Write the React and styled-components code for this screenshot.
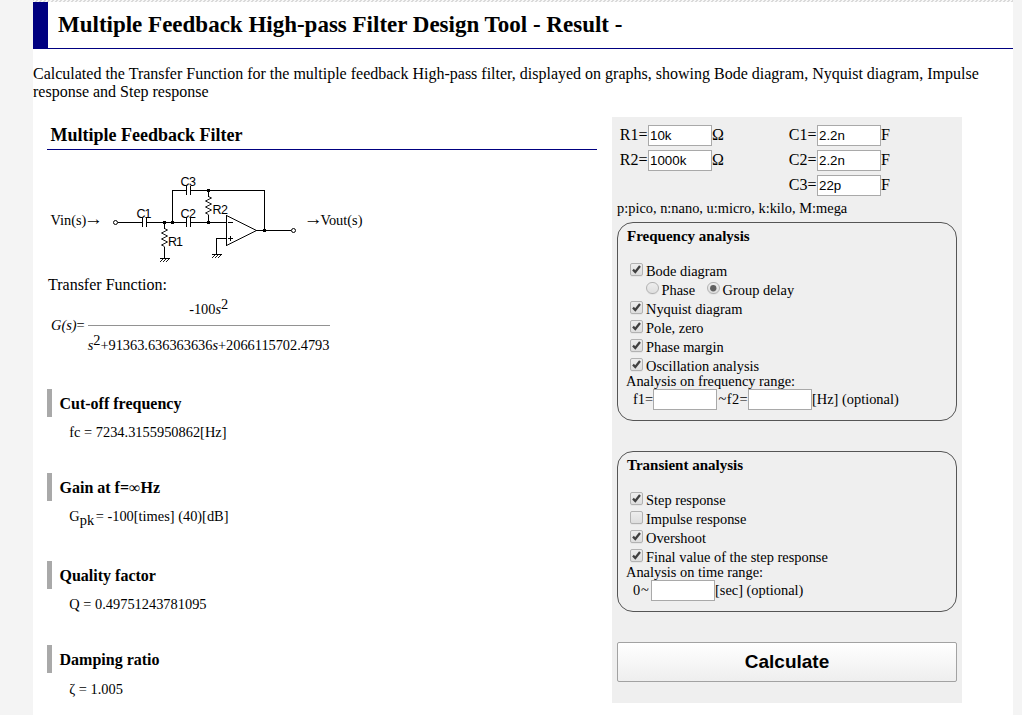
import React from 'react';
import styled, { createGlobalStyle } from 'styled-components';

const GlobalStyle = createGlobalStyle`
  * { box-sizing: border-box; }
  html, body { margin: 0; padding: 0; }
  body {
    background: #f4f4f4;
    color: #000;
    font-family: "Liberation Serif", "Times New Roman", serif;
    font-size: 16px;
    line-height: 18px;
  }
`;

const Page = styled.div`
  width: 980px;
  height: 715px;
  margin-left: 33px;
  background: #fff;
  overflow: hidden;
`;

const Hatch = styled.div`
  height: 2px;
  background: repeating-linear-gradient(135deg, #dadada 0 1.2px, #f8f8f8 1.2px 2.828px);
`;

const Title = styled.h1`
  height: 47px;
  margin: 0;
  padding-left: 10px;
  border-left: 15px solid #000080;
  border-bottom: 1px solid #000080;
  font-size: 23px;
  line-height: 46px;
`;

const Intro = styled.p`
  margin: 16px 0;
`;

const Columns = styled.div`
  display: flex;
  align-items: flex-start;
  gap: 15px;
  padding-left: 14px;
`;

const Main = styled.main`
  width: 550px;
  font-size: 14.4px;
`;

const Heading = styled.h2`
  height: 33px;
  margin: 0;
  padding-left: 3.5px;
  border-bottom: 1px solid #000080;
  font-size: 18px;
  line-height: 36px;
`;

const Schematic = styled.div`
  display: flex;
  height: 126px;
  padding: 20px 0 0 3px;
`;

const Signal = styled.span`
  display: flex;
  width: ${(p) => p.$width}px;
  padding-top: 41px;
  padding-left: ${(p) => p.$indent || 0}px;
  white-space: nowrap;
`;

const Arrow = styled.span`
  display: flex;
  justify-content: center;
  width: 14.4px;
  font-size: 19px;
  line-height: 15px;
`;

const Label = styled.div`
  padding-left: 1px;
  font-size: 16px;
  line-height: 18px;
  height: 20px;
`;

const Transfer = styled.div`
  display: flex;
  gap: 3px;
  height: 61px;
  margin-top: 1px;
  padding-left: 4px;
`;

const Function = styled.span`
  padding-top: 19px;
`;

const Fraction = styled.div`
  display: flex;
  flex-direction: column;
  width: 242px;
  white-space: nowrap;
  letter-spacing: -0.03px;
`;

const Numerator = styled.div`
  height: 29px;
  padding-top: 4px;
  border-bottom: 1px solid #929292;
  line-height: 17px;
  text-align: center;
`;

const Denominator = styled.div`
  height: 32px;
  padding-top: 11px;
  line-height: 17px;
`;

const Sup = styled.span`
  position: relative;
  top: -5px;
`;

const Sub = styled.span`
  position: relative;
  top: 4px;
  margin-right: -2px;
`;

const Results = styled.div`
  padding-top: 31px;
`;

const Result = styled.section`
  height: ${(p) => p.$height || 84}px;
`;

const ResultTitle = styled.h3`
  height: 28px;
  margin: 0;
  padding-left: 7.5px;
  border-left: 5px solid #a9a9a9;
  font-size: 16px;
  line-height: 30px;
`;

const Infinity = styled.span`
  font-weight: normal;
`;

const ResultValue = styled.div`
  padding: ${(p) => p.$top || 7}px 0 0 22.3px;
  line-height: 17px;
`;

const Panel = styled.form`
  width: 350px;
  height: 586px;
  padding: 8px 5px 0;
  background: #efefef;
  font-size: 14.4px;
`;

const Values = styled.div`
  display: grid;
  grid-template-columns: 169px 1fr;
  row-gap: 4px;
  padding-left: 2px;
  font-size: 16px;
`;

const Field = styled.label`
  display: flex;
  height: 21px;
  line-height: 20px;
  grid-column: ${(p) => p.$column};
`;

const FieldName = styled.span`
  width: ${(p) => p.$width}px;
  padding-right: ${(p) => p.$inset || 0}px;
  text-align: ${(p) => p.$align || 'left'};
  letter-spacing: ${(p) => p.$spacing || 0}px;
  white-space: nowrap;
`;

const Input = styled.input`
  width: 64px;
  height: 21px;
  padding: 1px;
  border: 1px solid #a9a9a9;
  border-radius: 0;
  background: #fff;
  color: #000;
  font: 13.333px "Liberation Sans", Arial, sans-serif;
`;

const Hint = styled.div`
  margin-top: 4px;
  height: 22px;
  line-height: 17px;
`;

const Group = styled.fieldset`
  height: ${(p) => p.$height}px;
  min-width: 0;
  margin: 0 0 30px;
  padding: 4px 8px 0;
  border: 1px solid #555;
  border-radius: 16px;
`;

const GroupTitle = styled.div`
  height: 35px;
  padding-left: 1px;
  font-size: 15px;
  font-weight: bold;
  line-height: 19px;
`;

const Option = styled.label`
  display: flex;
  height: 19px;
  line-height: 19px;
  padding-left: 4px;
  gap: 3px;
`;

const Radios = styled.div`
  display: flex;
  padding-left: 16px;
  gap: 8px;
`;

const RangeTitle = styled.div`
  height: 13px;
  line-height: 11px;
`;

const Range = styled.div`
  display: flex;
  height: 21px;
  padding-left: 7px;
  line-height: 21px;
`;

const Box = styled.span`
  display: block;
  width: ${(p) => (p.$round ? 12.5 : 13)}px;
  height: ${(p) => (p.$round ? 12.5 : 13)}px;
  margin-top: ${(p) => (p.$round ? 0.5 : 1)}px;
  border: 1px solid #b2b2b2;
  border-radius: ${(p) => (p.$round ? '50%' : '2px')};
  background: linear-gradient(#ededed, #dedede);
  box-shadow: 0 1px 0 rgba(0, 0, 0, 0.04);
`;

const Mark = styled.svg`
  display: block;
  width: 100%;
  height: 100%;
`;

const Submit = styled.button`
  display: block;
  width: 340px;
  height: 40px;
  padding: 0;
  border: 1px solid #a2a2a2;
  border-radius: 2px;
  background: linear-gradient(#fff, #eee);
  color: #000;
  font: bold 19px "Liberation Sans", Arial, sans-serif;
`;

const Drawing = styled.svg`
  display: block;
  width: 200px;
  height: 100px;
  fill: none;
  stroke: #000;
  shape-rendering: crispEdges;
  text {
    fill: #000;
    stroke: none;
    font: 12.5px "Liberation Sans", Arial, sans-serif;
  }
`;

const Node = ({ x, y }) => <rect x={x - 1} y={y - 1} width="3" height="3" fill="#000" stroke="none" />;

const Capacitor = ({ x, y }) => (
  <path d={`M${x - 1.5} ${y - 4}v9M${x + 2.5} ${y - 4}v9`} />
);

const Resistor = ({ x, y }) => (
  <path
    shapeRendering="auto"
    strokeWidth="0.9"
    d={`M${x + 0.5} ${y}l3 1.5l-6 3l6 3l-6 3l6 3l-6 3l3 1.5`}
  />
);

const Ground = ({ x, y }) => (
  <g>
    <path d={`M${x - 4} ${y + 0.5}h10`} />
    <path
      shapeRendering="auto"
      strokeWidth="0.9"
      d={`M${x - 1} ${y + 1}l-3 3M${x + 2} ${y + 1}l-3 3M${x + 5} ${y + 1}l-3 3`}
    />
  </g>
);

const Circuit = () => (
  <Drawing viewBox="105 170 200 100">
    <circle cx="115.5" cy="222.5" r="2" shapeRendering="auto" />
    <circle cx="293.5" cy="230.5" r="2" shapeRendering="auto" />
    <path d="M118 222.5h24M147 222.5h39M191 222.5h35" />
    <path d="M172.5 223v-32.5h13.5M191 190.5h73.5v40" />
    <path d="M164.5 223v6M164.5 247v11M208.5 190v7M208.5 215v8" />
    <path d="M226.5 215v31M256 230.5h35M226 238.5h-9.5v16" />
    <path shapeRendering="auto" d="M226.5 215.5L256.5 230.5L226.5 245.5" />
    <path d="M228 222.5h5M228 238.5h5M230.5 236v5" />
    <Capacitor x={144} y={222} />
    <Capacitor x={188} y={222} />
    <Capacitor x={188} y={190} />
    <Resistor x={164} y={228.5} />
    <Resistor x={208} y={196.5} />
    <Ground x={164} y={258} />
    <Ground x={216} y={254} />
    <Node x={164} y={222} />
    <Node x={172} y={222} />
    <Node x={208} y={222} />
    <Node x={208} y={190} />
    <Node x={264} y={230} />
    <text x="136.5" y="218" textLength="15">C1</text>
    <text x="180.5" y="218" textLength="15.5">C2</text>
    <text x="180.5" y="186" textLength="15.5">C3</text>
    <text x="168" y="246" textLength="15">R1</text>
    <text x="212.5" y="214" textLength="15.5">R2</text>
  </Drawing>
);

const Check = ({ checked, children }) => (
  <Option>
    <Box>
      {checked && (
        <Mark viewBox="0 0 11 11">
          <path d="M2 5.6L4.3 8L9 2" fill="none" stroke="#404040" strokeWidth="2.3" />
        </Mark>
      )}
    </Box>
    <span>{children}</span>
  </Option>
);

const Radio = ({ checked, children }) => (
  <Option>
    <Box $round>
      {checked && (
        <Mark viewBox="0 0 10 10">
          <circle cx="5" cy="5" r="3" fill="#606060" />
        </Mark>
      )}
    </Box>
    <span>{children}</span>
  </Option>
);

const Value = ({ name, value, unit, column }) => (
  <Field $column={column}>
    <FieldName $width={29} $inset={0.5} $align="right">{name}=</FieldName>
    <Input defaultValue={value} />
    {unit}
  </Field>
);

export default function App() {
  return (
    <>
      <GlobalStyle />
      <Page>
        <Hatch />
        <Title>Multiple Feedback High-pass Filter Design Tool - Result -</Title>
        <Intro>
          Calculated the Transfer Function for the multiple feedback High-pass filter, displayed on graphs,
          showing Bode diagram, Nyquist diagram, Impulse response and Step response
        </Intro>
        <Columns>
          <Main>
            <Heading>Multiple Feedback Filter</Heading>
            <Schematic>
              <Signal $width={55} $indent={0.5}>Vin(s)<Arrow>→</Arrow></Signal>
              <Circuit />
              <Signal $width={60} $indent={1}><Arrow>→</Arrow>Vout(s)</Signal>
            </Schematic>
            <Label>Transfer Function:</Label>
            <Transfer>
              <Function><i>G(s)</i>=</Function>
              <Fraction>
                <Numerator>-100<i>s</i><Sup>2</Sup></Numerator>
                <Denominator><i>s</i><Sup>2</Sup>+91363.636363636<i>s</i>+2066115702.4793</Denominator>
              </Fraction>
            </Transfer>
            <Results>
              <Result>
                <ResultTitle>Cut-off frequency</ResultTitle>
                <ResultValue>fc = 7234.3155950862[Hz]</ResultValue>
              </Result>
              <Result $height={88}>
                <ResultTitle>Gain at f=<Infinity>∞</Infinity>Hz</ResultTitle>
                <ResultValue>G<Sub>pk</Sub> = -100[times] (40)[dB]</ResultValue>
              </Result>
              <Result>
                <ResultTitle>Quality factor</ResultTitle>
                <ResultValue>Q = 0.49751243781095</ResultValue>
              </Result>
              <Result>
                <ResultTitle>Damping ratio</ResultTitle>
                <ResultValue $top={8}>ζ = 1.005</ResultValue>
              </Result>
            </Results>
          </Main>
          <Panel>
            <Values>
              <Value column={1} name="R1" value="10k" unit="Ω" />
              <Value column={2} name="C1" value="2.2n" unit="F" />
              <Value column={1} name="R2" value="1000k" unit="Ω" />
              <Value column={2} name="C2" value="2.2n" unit="F" />
              <Value column={2} name="C3" value="22p" unit="F" />
            </Values>
            <Hint>p:pico, n:nano, u:micro, k:kilo, M:mega</Hint>
            <Group $height={199}>
              <GroupTitle>Frequency analysis</GroupTitle>
              <Check checked>Bode diagram</Check>
              <Radios>
                <Radio>Phase</Radio>
                <Radio checked>Group delay</Radio>
              </Radios>
              <Check checked>Nyquist diagram</Check>
              <Check checked>Pole, zero</Check>
              <Check checked>Phase margin</Check>
              <Check checked>Oscillation analysis</Check>
              <RangeTitle>Analysis on frequency range:</RangeTitle>
              <Range>
                <FieldName $width={20}>f1=</FieldName>
                <Input />
                <FieldName $width={31} $align="right" $spacing={0.4}>~f2=</FieldName>
                <Input />
                <span>[Hz] (optional)</span>
              </Range>
            </Group>
            <Group $height={161}>
              <GroupTitle>Transient analysis</GroupTitle>
              <Check checked>Step response</Check>
              <Check>Impulse response</Check>
              <Check checked>Overshoot</Check>
              <Check checked>Final value of the step response</Check>
              <RangeTitle>Analysis on time range:</RangeTitle>
              <Range>
                <FieldName $width={18} $spacing={0.8}>0~</FieldName>
                <Input />
                <span>[sec] (optional)</span>
              </Range>
            </Group>
            <Submit type="button">Calculate</Submit>
          </Panel>
        </Columns>
      </Page>
    </>
  );
}
